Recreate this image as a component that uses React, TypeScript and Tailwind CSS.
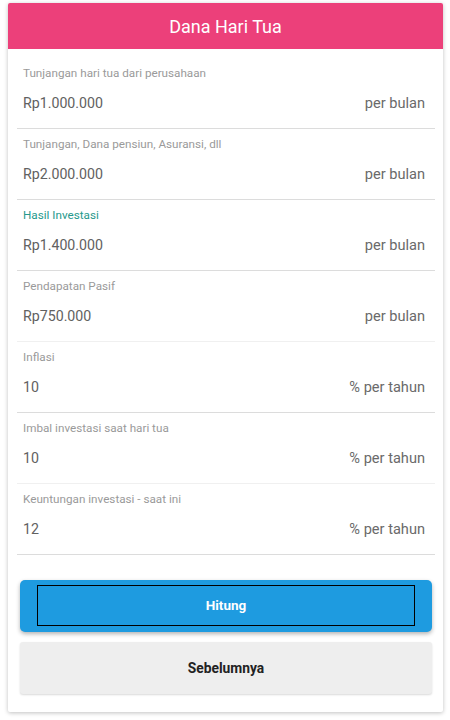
import React from 'react';

type Field = {
  label: string;
  value: string;
  unit: string;
  active?: boolean;
  faint?: boolean;
};

const fields: Field[] = [
  { label: 'Tunjangan hari tua dari perusahaan', value: 'Rp1.000.000', unit: 'per bulan' },
  { label: 'Tunjangan, Dana pensiun, Asuransi, dll', value: 'Rp2.000.000', unit: 'per bulan' },
  { label: 'Hasil Investasi', value: 'Rp1.400.000', unit: 'per bulan', active: true },
  { label: 'Pendapatan Pasif', value: 'Rp750.000', unit: 'per bulan', faint: true },
  { label: 'Inflasi', value: '10', unit: '% per tahun' },
  { label: 'Imbal investasi saat hari tua', value: '10', unit: '% per tahun', faint: true },
  { label: 'Keuntungan investasi - saat ini', value: '12', unit: '% per tahun' },
];

function FieldRow({ field }: { field: Field }) {
  return (
    <div
      className={`pl-[6px] pr-[10px] pt-[7px] pb-[14px] border-b ${
        field.faint ? 'border-[#f0f0f0]' : 'border-[#dcdcdc]'
      }`}
    >
      <div
        className={`text-[11.7px] leading-[17px] ${
          field.active ? 'text-[#26998c]' : 'text-[#9a9a9a]'
        }`}
      >
        {field.label}
      </div>
      <div className="mt-[12px] flex items-center justify-between h-[20px]">
        <span className="text-[14.2px] text-[#616161]">{field.value}</span>
        <span className="text-[14.6px] text-[#6a6a6a]">{field.unit}</span>
      </div>
    </div>
  );
}

export default function App() {
  return (
    <div className="w-[450px] h-[720px] bg-white pt-[3px] font-['Roboto','Liberation_Sans',sans-serif]">
      <div className="ml-[8px] w-[435px] bg-white rounded-[2px] shadow-[0_1px_4px_rgba(0,0,0,0.25)] overflow-hidden">
        {/* Header */}
        <div className="h-[46px] bg-[#ec407a] flex items-center justify-center">
          <h1 className="text-white text-[18px]">Dana Hari Tua</h1>
        </div>

        {/* Fields */}
        <div className="pt-[9px] pl-[9px] pr-[8px]">
          {fields.map((f) => (
            <FieldRow key={f.label} field={f} />
          ))}
        </div>

        {/* Actions */}
        <div className="pt-[25px] pb-[18px] pl-[12px] pr-[11px] flex flex-col gap-[10px]">
          <button className="h-[52px] rounded-[5px] bg-[#1e9be0] shadow-[0_2px_4px_rgba(0,0,0,0.3)] pt-[5px] pb-[6px] px-[17px]">
            <div className="h-full border-[1.5px] border-black flex items-center justify-center text-white text-[13.5px] font-bold">
              Hitung
            </div>
          </button>
          <button className="h-[52px] rounded-[3px] bg-[#eeeeee] shadow-[0_1px_2px_rgba(0,0,0,0.15)] flex items-center justify-center text-[#222] text-[13.8px] font-bold">
            Sebelumnya
          </button>
        </div>
      </div>
    </div>
  );
}
